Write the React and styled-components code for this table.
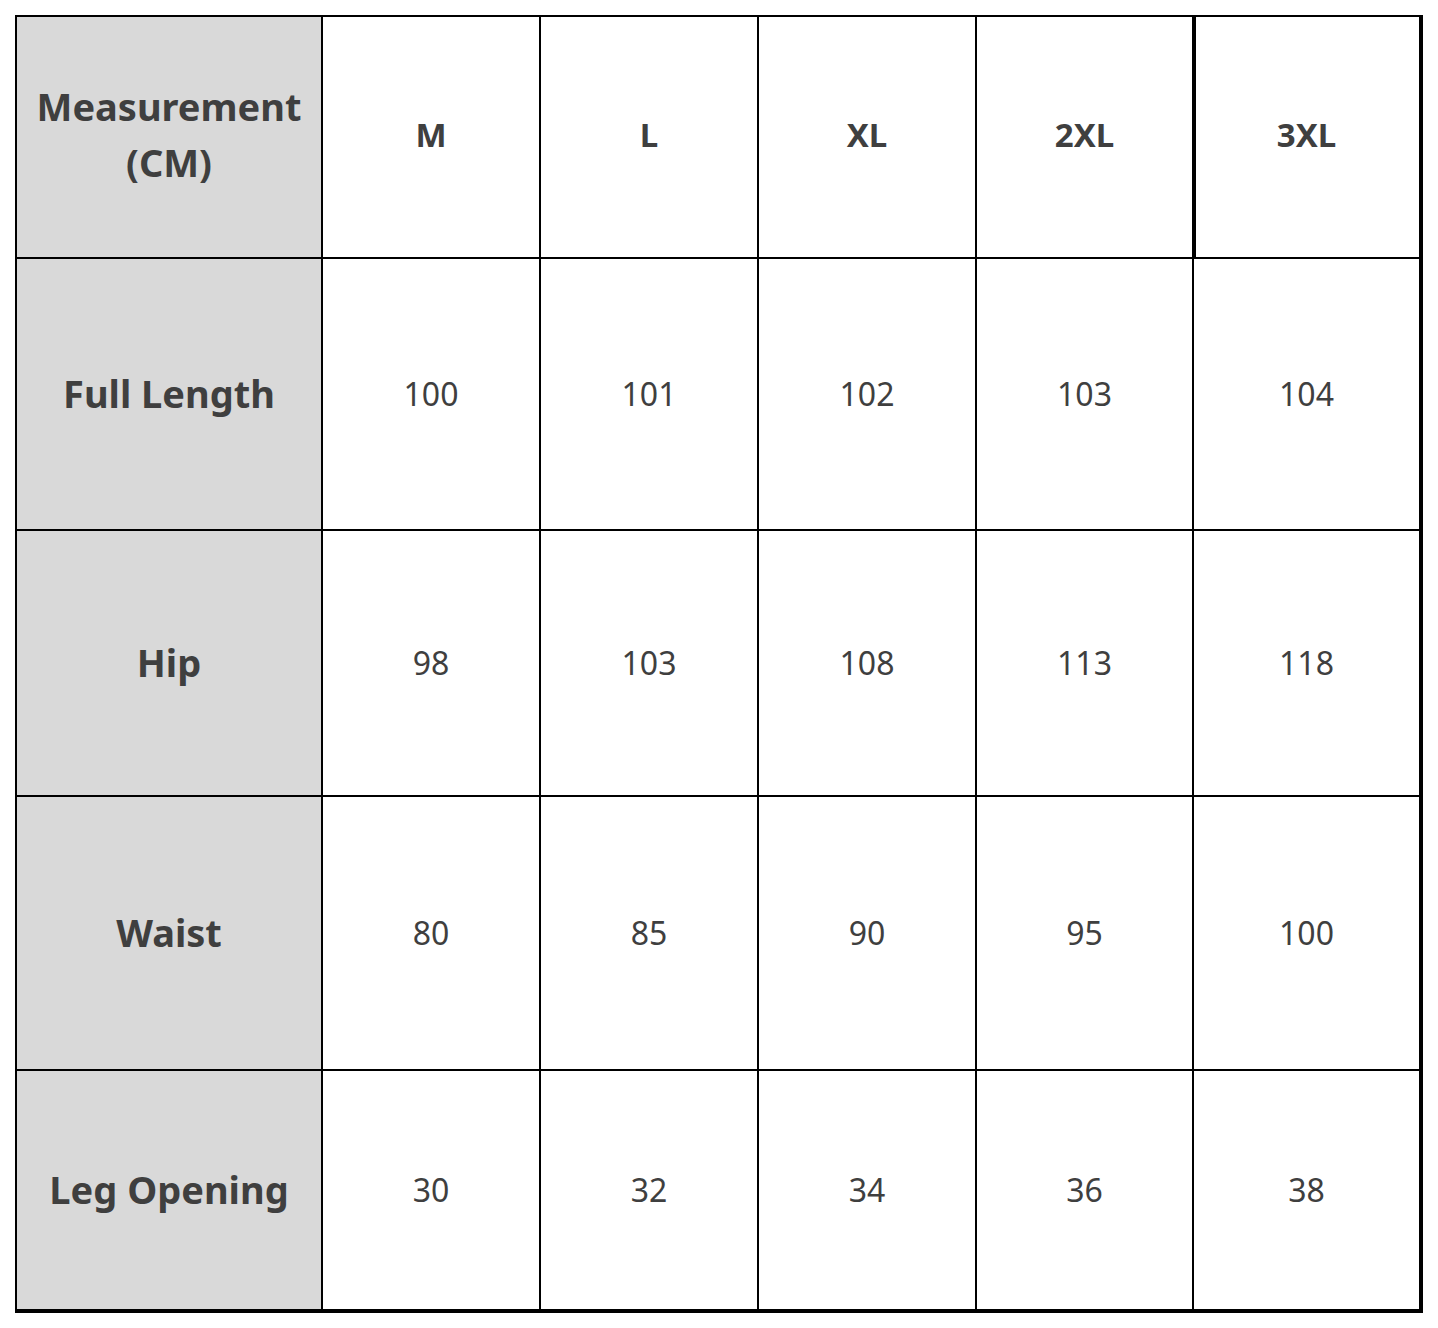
import styled, { createGlobalStyle } from 'styled-components';

const GlobalStyle = createGlobalStyle`
  html, body {
    margin: 0;
    padding: 0;
    background: #ffffff;
  }
  body {
    font-family: "Noto Sans", "Open Sans", sans-serif;
    color: #3f3f3f;
  }
`;

const Page = styled.div`
  padding: 15px 0 0 15px;
`;

const Grid = styled.div`
  display: grid;
  width: 1408px;
  box-sizing: border-box;
  grid-template-columns: 304px 216px 216px 216px 215px 225px;
  grid-template-rows: 240px 270px 264px 272px 238px;
  gap: 2px;
  padding: 2px 4px 4px 2px;
  background: #000000;
`;

const Cell = styled.div`
  display: flex;
  align-items: center;
  justify-content: center;
  text-align: center;
  box-sizing: border-box;
  padding-bottom: ${(p) => (p.$top ? '4px' : '0')};
  background: ${(p) => (p.$label ? '#d9d9d9' : '#ffffff')};
  font-size: ${(p) => (p.$label ? '38px' : p.$head ? '33px' : '32px')};
  font-weight: ${(p) => (p.$label || p.$head ? 700 : 400)};
  line-height: 1.47;
  color: #3f3f3f;
  box-shadow: ${(p) => (p.$thick ? 'inset 2px 0 0 #000000' : 'none')};
`;

const sizes = ['M', 'L', 'XL', '2XL', '3XL'];

const rows = [
  { name: 'Full Length', values: [100, 101, 102, 103, 104] },
  { name: 'Hip', values: [98, 103, 108, 113, 118] },
  { name: 'Waist', values: [80, 85, 90, 95, 100] },
  { name: 'Leg Opening', values: [30, 32, 34, 36, 38] },
];

export default function App() {
  return (
    <Page>
      <GlobalStyle />
      <Grid>
        <Cell $label $top>
          Measurement
          <br />
          (CM)
        </Cell>
        {sizes.map((s) => (
          <Cell key={s} $head $top $thick={s === '3XL'}>
            {s}
          </Cell>
        ))}
        {rows.map((r) => [
          <Cell key={r.name} $label>
            {r.name}
          </Cell>,
          ...r.values.map((v, i) => <Cell key={`${r.name}-${i}`}>{v}</Cell>),
        ])}
      </Grid>
    </Page>
  );
}
